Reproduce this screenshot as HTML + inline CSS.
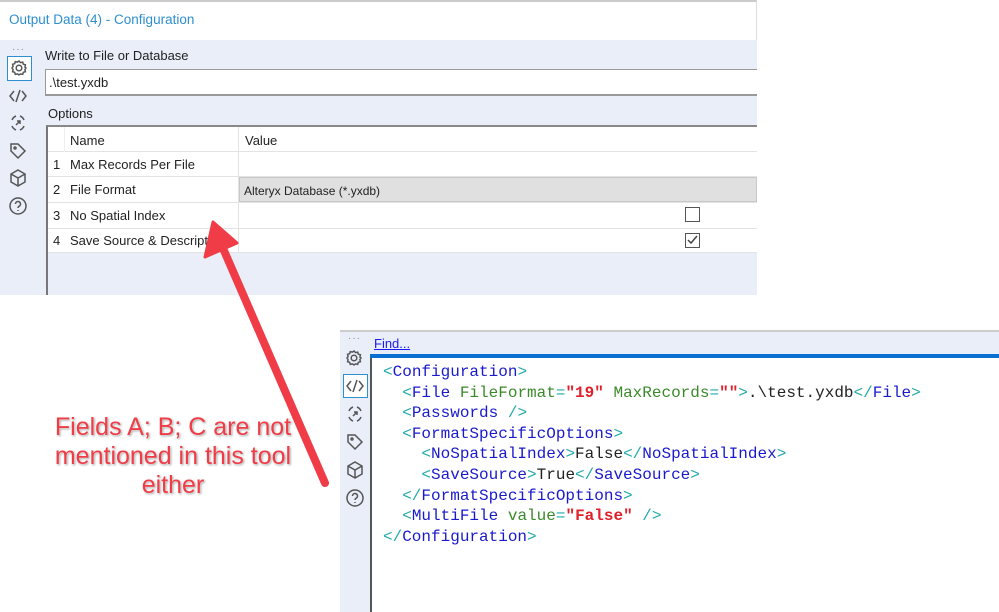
<!DOCTYPE html>
<html><head><meta charset="utf-8"><style>
*{margin:0;padding:0;box-sizing:border-box}
body{width:999px;height:612px;background:#fff;position:relative;overflow:hidden;font-family:"Liberation Sans",sans-serif;font-size:13px;color:#222}
.a{position:absolute}
.ic{position:absolute;width:20px;height:20px}
.ic svg{width:20px;height:20px;fill:none;stroke:#555;stroke-width:1.5}
.code{position:absolute;left:383px;font-family:"Liberation Mono",monospace;font-size:16px;white-space:pre;line-height:20.6px}
.t{color:#1a1acc}.b{color:#2aa}.g{color:#3a8a2a}.r{color:#e0202a;font-weight:bold}.k{color:#222}
.note{position:absolute;left:28px;top:413px;width:290px;text-align:center;color:#f03c46;font-size:25px;line-height:29px;text-shadow:0 0 2px #fff,1px 1px 2px #888,-1px -1px 1px #fff}
</style></head><body>
<div class="a" style="left:0;top:0;width:757px;height:40px;background:#fff;border-top:2px solid #ccc;border-right:1px solid #ddd"></div>
<div class="a" style="left:9px;top:12px;color:#2d8fd0;font-size:13.5px">Output Data (4) - Configuration</div>
<div class="a" style="left:0;top:40px;width:757px;height:255px;background:#e9eef8"></div>
<div class="a" style="left:12px;top:44px;color:#888;font-size:10px;letter-spacing:1px">···</div>
<div class="a" style="left:7px;top:56px;width:25px;height:25px;border:1.5px solid #2d8fd0;background:#fff"></div>
<div class="ic" style="left:9px;top:58px"><svg viewBox="0 0 20 20"><circle cx="10" cy="10" r="2.8"/><path d="M10 3l1.5 1.6 2.2-.5.6 2.1 2.1.6-.5 2.2L17 10l-1.1 1.5.5 2.2-2.1.6-.6 2.1-2.2-.5L10 17l-1.5-1.1-2.2.5-.6-2.1-2.1-.6.5-2.2L3 10l1.1-1.5-.5-2.2 2.1-.6.6-2.1 2.2.5z"/></svg></div>
<div class="ic" style="left:8px;top:86px"><svg viewBox="0 0 20 20"><path d="M6 5L2 10l4 5M14 5l4 5-4 5M12 4L8 16"/></svg></div>
<div class="ic" style="left:8px;top:113px"><svg viewBox="0 0 20 20"><path d="M4 7a7 7 0 0 1 4-4M12 3a7 7 0 0 1 4 4M16 13a7 7 0 0 1-4 4M8 17a7 7 0 0 1-4-4M8 12l4-4M9 8h3v3"/></svg></div>
<div class="ic" style="left:8px;top:141px"><svg viewBox="0 0 20 20"><path d="M3 3h7l7 7-7 7-7-7z"/><circle cx="7" cy="7" r="1"/></svg></div>
<div class="ic" style="left:8px;top:168px"><svg viewBox="0 0 20 20"><path d="M10 2l7 4v8l-7 4-7-4V6zM3 6l7 4 7-4M10 10v8"/></svg></div>
<div class="ic" style="left:8px;top:196px"><svg viewBox="0 0 20 20"><circle cx="10" cy="10" r="8"/><path d="M7.5 8a2.5 2.5 0 1 1 3.5 2.3c-.7.4-1 .8-1 1.7M10 14v1"/></svg></div>
<div class="a" style="left:45px;top:48px;font-size:13px">Write to File or Database</div>
<div class="a" style="left:45px;top:69px;width:712px;height:27px;background:#fff;border:1px solid #999;border-right:none;border-bottom:2px solid #999;padding:5px 0 0 3px">.\test.yxdb</div>
<div class="a" style="left:48px;top:106px">Options</div>
<div class="a" style="left:46px;top:125px;width:711px;height:170px;border-left:2px solid #777;border-top:2px solid #888;background:#e9eef8"></div>
<div class="a" style="left:48px;top:127px;width:709px;height:126px;background:#fff"></div>
<div class="a" style="left:48px;top:151px;width:709px;border-top:1px solid #e3e3e3"></div>
<div class="a" style="left:48px;top:176px;width:709px;border-top:1px solid #e3e3e3"></div>
<div class="a" style="left:239px;top:177px;width:518px;height:25px;background:#e0e0e0;border:1px solid #c8c8c8"></div>
<div class="a" style="left:48px;top:202px;width:709px;border-top:1px solid #e3e3e3"></div>
<div class="a" style="left:48px;top:228px;width:709px;border-top:1px solid #e3e3e3"></div>
<div class="a" style="left:48px;top:252px;width:709px;border-top:1px solid #e3e3e3"></div>
<div class="a" style="left:238px;top:127px;height:126px;border-left:1px solid #e3e3e3"></div>
<div class="a" style="left:64px;top:127px;height:25px;border-left:1px solid #eee"></div>
<div class="a" style="left:70px;top:133px">Name</div>
<div class="a" style="left:245px;top:133px">Value</div>
<div class="a" style="left:53px;top:157px">1</div><div class="a" style="left:70px;top:157px">Max Records Per File</div>
<div class="a" style="left:53px;top:182px">2</div><div class="a" style="left:70px;top:182px">File Format</div>
<div class="a" style="left:244px;top:184px;font-size:12px">Alteryx Database (*.yxdb)</div>
<div class="a" style="left:53px;top:208px">3</div><div class="a" style="left:70px;top:208px">No Spatial Index</div>
<div class="a" style="left:53px;top:233px">4</div><div class="a" style="left:70px;top:233px">Save Source &amp; Description</div>
<div class="a" style="left:685px;top:207px;width:15px;height:15px;border:1.5px solid #555;background:#fff"></div>
<div class="a" style="left:685px;top:233px;width:15px;height:15px;border:1.5px solid #555;background:#fff"><svg width="12" height="12" style="position:absolute;left:0;top:0"><path d="M2 6l3 3 6-7" fill="none" stroke="#444" stroke-width="1.5"/></svg></div>
<div class="a" style="left:340px;top:330px;width:659px;height:282px;background:#e9eef8;border-top:2px solid #ccc"></div>
<div class="a" style="left:348px;top:333px;color:#888;font-size:10px;letter-spacing:1px">···</div>
<div class="a" style="left:374px;top:336px;color:#1a1aee;text-decoration:underline;font-size:13px">Find...</div>
<div class="ic" style="left:344px;top:348px"><svg viewBox="0 0 20 20"><circle cx="10" cy="10" r="2.8"/><path d="M10 3l1.5 1.6 2.2-.5.6 2.1 2.1.6-.5 2.2L17 10l-1.1 1.5.5 2.2-2.1.6-.6 2.1-2.2-.5L10 17l-1.5-1.1-2.2.5-.6-2.1-2.1-.6.5-2.2L3 10l1.1-1.5-.5-2.2 2.1-.6.6-2.1 2.2.5z"/></svg></div>
<div class="a" style="left:343px;top:374px;width:25px;height:24px;border:1.5px solid #2d8fd0;background:#fff"></div>
<div class="ic" style="left:345px;top:376px"><svg viewBox="0 0 20 20"><path d="M6 5L2 10l4 5M14 5l4 5-4 5M12 4L8 16"/></svg></div>
<div class="ic" style="left:345px;top:404px"><svg viewBox="0 0 20 20"><path d="M4 7a7 7 0 0 1 4-4M12 3a7 7 0 0 1 4 4M16 13a7 7 0 0 1-4 4M8 17a7 7 0 0 1-4-4M8 12l4-4M9 8h3v3"/></svg></div>
<div class="ic" style="left:345px;top:432px"><svg viewBox="0 0 20 20"><path d="M3 3h7l7 7-7 7-7-7z"/><circle cx="7" cy="7" r="1"/></svg></div>
<div class="ic" style="left:345px;top:460px"><svg viewBox="0 0 20 20"><path d="M10 2l7 4v8l-7 4-7-4V6zM3 6l7 4 7-4M10 10v8"/></svg></div>
<div class="ic" style="left:345px;top:488px"><svg viewBox="0 0 20 20"><circle cx="10" cy="10" r="8"/><path d="M7.5 8a2.5 2.5 0 1 1 3.5 2.3c-.7.4-1 .8-1 1.7M10 14v1"/></svg></div>
<div class="a" style="left:370px;top:354px;width:629px;height:4px;background:#0a6fd0"></div>
<div class="a" style="left:370px;top:358px;width:629px;height:254px;background:#fff;border-left:2px solid #555"></div>
<div class="code" style="top:362px"><span class="b">&lt;</span><span class="t">Configuration</span><span class="b">&gt;</span>
  <span class="b">&lt;</span><span class="t">File</span> <span class="g">FileFormat</span><span class="b">=</span><span class="r">"19"</span> <span class="g">MaxRecords</span><span class="b">=</span><span class="r">""</span><span class="b">&gt;</span><span class="k">.\test.yxdb</span><span class="b">&lt;/</span><span class="t">File</span><span class="b">&gt;</span>
  <span class="b">&lt;</span><span class="t">Passwords</span> <span class="b">/&gt;</span>
  <span class="b">&lt;</span><span class="t">FormatSpecificOptions</span><span class="b">&gt;</span>
    <span class="b">&lt;</span><span class="t">NoSpatialIndex</span><span class="b">&gt;</span><span class="k">False</span><span class="b">&lt;/</span><span class="t">NoSpatialIndex</span><span class="b">&gt;</span>
    <span class="b">&lt;</span><span class="t">SaveSource</span><span class="b">&gt;</span><span class="k">True</span><span class="b">&lt;/</span><span class="t">SaveSource</span><span class="b">&gt;</span>
  <span class="b">&lt;/</span><span class="t">FormatSpecificOptions</span><span class="b">&gt;</span>
  <span class="b">&lt;</span><span class="t">MultiFile</span> <span class="g">value</span><span class="b">=</span><span class="r">"False"</span> <span class="b">/&gt;</span>
<span class="b">&lt;/</span><span class="t">Configuration</span><span class="b">&gt;</span></div>
<svg class="a" style="left:0;top:0" width="999" height="612"><line x1="325" y1="483" x2="222" y2="246" stroke="#f03c46" stroke-width="8" stroke-linecap="round"/><polygon points="213,222 205,257 237,243" fill="#f03c46" stroke="#f03c46" stroke-width="3" stroke-linejoin="round"/></svg>
<div class="note">Fields A; B; C are not mentioned in this tool either</div>
</body></html>
